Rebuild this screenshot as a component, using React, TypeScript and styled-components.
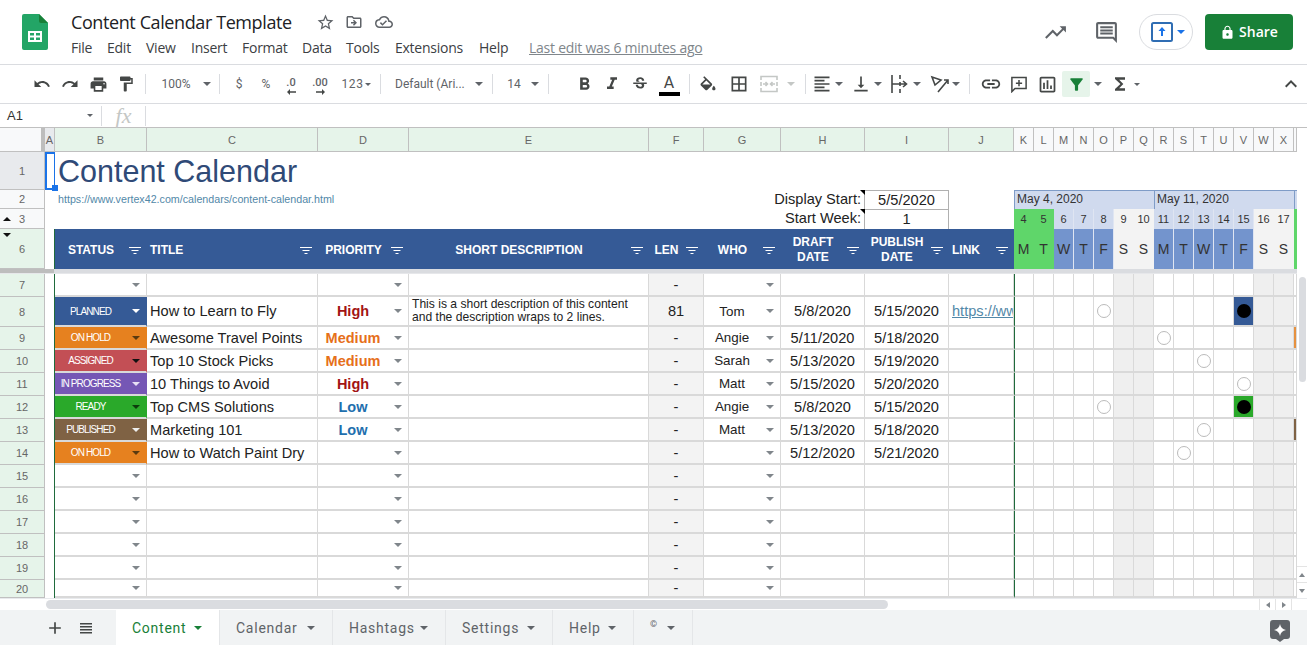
import React from 'react';
import styled, { createGlobalStyle, css } from 'styled-components';
import {
  MdUndo, MdRedo, MdPrint, MdFormatPaint, MdStrikethroughS, MdBorderAll,
  MdFormatAlignLeft, MdVerticalAlignBottom, MdLink, MdOutlineInsertChart,
  MdFilterAlt, MdFunctions, MdExpandLess, MdStarBorder, MdOutlineDriveFileMove, MdOutlineCloudDone,
  MdTrendingUp, MdOutlineComment, MdLock, MdAdd, MdFormatItalic, MdFormatBold,
} from 'react-icons/md';

const Global = createGlobalStyle`
  html, body { margin: 0; padding: 0; overflow: hidden; background: #fff; }
  * { box-sizing: border-box; }
`;

const UI = `Roboto, "Liberation Sans", sans-serif`;
const SHEET = `"Liberation Sans", Arial, sans-serif`;
const GRID_LINE = '#d9d9d9';
const FREEZE_GREEN = '#1f6b3c';

const Page = styled.div`
  width: 1307px; height: 645px; display: flex; flex-direction: column; overflow: hidden;
  font-family: ${UI}; color: #3c4043;
`;

/* ---------- header ---------- */
const Header = styled.header`
  height: 65px; flex: none; display: flex; align-items: flex-start; border-bottom: 1px solid #dadce0;
  padding: 14px 14px 0 22px;
`;
const TitleBlock = styled.div`margin-left: 23px; display: flex; flex-direction: column;`;
const TitleRow = styled.div`display: flex; align-items: center; height: 18px; margin-top: -1px;`;
const DocTitle = styled.div`font: 18px/18px "Open Sans", sans-serif; color: #202124; width: 244px; letter-spacing: -0.4px;`;
const TitleIcon = styled.span<{ $w: number }>`
  width: ${p => p.$w}px; display: flex; justify-content: center; color: #5f6368; font-size: 18px;
`;
const Menu = styled.nav`display: flex; align-items: center; height: 20px; margin-top: 7px; font: 14px/20px "Open Sans", ${UI}; color: #3c4043;`;
const MenuItem = styled.span<{ $w: number }>`width: ${p => p.$w}px; letter-spacing: -0.25px;`;
const LastEdit = styled.span`margin-left: 0; text-decoration: underline; color: #80868b; letter-spacing: -0.25px; white-space: nowrap;`;
const HeaderRight = styled.div`margin-left: auto; display: flex; align-items: center; height: 36px;`;
const HeadIcon = styled.span<{ $w: number }>`width: ${p => p.$w}px; display: flex; justify-content: center; color: #5f6368;`;
const PresentPill = styled.div`
  width: 54px; height: 36px; border: 1px solid #dadce0; border-radius: 18px; margin-left: 12px;
  display: flex; align-items: center; padding-left: 11px; gap: 4px;
`;
const ShareButton = styled.div`
  width: 88px; height: 36px; border-radius: 4px; background: #188038; color: #fff; margin-left: 12px;
  display: flex; align-items: center; justify-content: center; gap: 4px;
  font: 600 14px/36px "Open Sans", ${UI};
`;

/* ---------- toolbar ---------- */
const Toolbar = styled.div`
  height: 39px; flex: none; display: flex; align-items: center; padding: 0 2px 0 28px;
  border-bottom: 1px solid #dadce0; color: #444746; font-size: 12px;
`;
const Tool = styled.div<{ $w: number; $ml?: number; $active?: boolean; $off?: boolean; $auto?: boolean }>`
  width: ${p => p.$w}px; height: 26px; flex: none; display: flex; align-items: center; justify-content: center;
  margin-left: ${p => (p.$auto ? 'auto' : `${p.$ml ?? 0}px`)};
  color: ${p => (p.$off ? '#c4c7c5' : '#444746')};
  background: ${p => (p.$active ? '#e6f4ea' : 'transparent')};
  border-radius: 2px; white-space: nowrap;
`;
const TextTool = styled(Tool)<{ $left?: number }>`
  font: 12px/26px ${UI}; color: #5f6368;
  justify-content: ${p => (p.$left ? 'flex-start' : 'center')};
  padding-left: ${p => p.$left ?? 0}px;
`;
const NumberFormat = styled(TextTool)`letter-spacing: 0.6px; gap: 1px;`;
const Sep = styled.div<{ $w: number }>`
  width: ${p => p.$w}px; flex: none; height: 20px; display: flex; justify-content: center;
  &::after { content: ''; width: 1px; background: #dadce0; }
`;
const Caret = styled.span<{ $c?: string; $s?: number }>`
  display: inline-block; width: 0; height: 0; flex: none;
  border-left: ${p => p.$s ?? 4}px solid transparent;
  border-right: ${p => p.$s ?? 4}px solid transparent;
  border-top: ${p => p.$s ?? 4}px solid ${p => p.$c ?? '#5f6368'};
`;
const Stack = styled.div`display: flex; flex-direction: column; align-items: center; font: 500 11px/12px ${UI}; color: #5f6368; margin-top: 4px;`;
const ColorA = styled.div`
  display: flex; flex-direction: column; align-items: center; width: 22px;
  font: 16px/18px ${UI}; color: #444746; margin-top: 1px;
  &::after { content: ''; width: 21px; height: 4px; background: #000; }
`;

/* ---------- formula bar ---------- */
const FormulaBar = styled.div`
  height: 24px; flex: none; display: flex; align-items: center; border-bottom: 1px solid #c0c0c0;
  font: 13px/24px ${SHEET}; color: #333;
`;
const NameBox = styled.div`width: 102px; height: 20px; padding: 0 7px; display: flex; align-items: center; justify-content: space-between; border-right: 1px solid #dadce0; padding-right: 8px;`;
const Fx = styled.div`width: 44px; height: 20px; border-right: 1px solid #dadce0; text-align: center; font: italic 22px/20px "Liberation Serif", serif; color: #c4c7c5;`;

/* ---------- sheet ---------- */
const Body = styled.div`flex: none; height: 470px; display: flex;`;
const Sheet = styled.div`
  width: 1297px; flex: none; display: grid; overflow: hidden;
  grid-template-columns: 45px 10px 92px 171px 91px 240px 55px 77px 84px 84px 65px repeat(14, 20px) 3px;
  grid-template-rows: 24px 38px 19px 20px 40px 5px 23px 30px repeat(11, 23px) 18px;
  font-family: ${SHEET}; color: #222;
`;
const ColHead = styled.div<{ $tone: 'corner' | 'sel' | 'filter' | 'plain' }>`
  display: flex; align-items: center; justify-content: center; font-size: 11px; color: #666;
  border-right: 1px solid #c0c0c0; border-bottom: 1px solid #c0c0c0;
  background: ${p => ({ corner: '#f8f9fa', sel: '#e8eaed', filter: '#e6f4ea', plain: '#f8f9fa' }[p.$tone])};
  ${p => p.$tone === 'corner' && css`border-right: 4px solid #bdbdbd;`}
`;
const RowHead = styled.div<{ $tone: 'sel' | 'filter' | 'plain' }>`
  position: relative; display: flex; align-items: center; justify-content: center; font-size: 11px; color: #666;
  border-right: 1px solid #c0c0c0; border-bottom: 1px solid #c0c0c0;
  background: ${p => ({ sel: '#e8eaed', filter: '#e6f4ea', plain: '#f8f9fa' }[p.$tone])};
`;
const GroupArrow = styled.span<{ $up?: boolean; $top: number }>`
  position: absolute; left: 3px; top: ${p => p.$top}px; width: 0; height: 0;
  border-left: 4px solid transparent; border-right: 4px solid transparent;
  ${p => (p.$up ? 'border-bottom: 4px solid #111;' : 'border-top: 4px solid #111;')}
`;
const SelectedA = styled.div`position: relative; border: 2px solid #1a73e8; border-right-width: 1px;`;
const FillHandle = styled.span`position: absolute; right: -4px; bottom: -3px; width: 6px; height: 6px; background: #1a73e8;`;
const TitleCell = styled.div`grid-column: 3 / -1; font-size: 30.5px; line-height: 38px; padding-left: 3px; color: #2f4a77; white-space: nowrap;`;
const LinkCell = styled.div`grid-column: span 5; font-size: 10.7px; line-height: 18px; padding-left: 3px; color: #5288a8; white-space: nowrap;`;
const Blank = styled.div<{ $span?: number }>`${p => p.$span && `grid-column: span ${p.$span};`}`;
const LabelCell = styled.div`
  position: relative; grid-column: span 2; font-size: 14.6px; line-height: 18px; text-align: right; padding-right: 4px;
  &::after { content: ''; position: absolute; right: 0; top: 0; border-top: 5px solid #000; border-left: 5px solid transparent; }
`;
const ValueCell = styled.div`font-size: 14.6px; line-height: 18px; text-align: center; border: 1px solid #b0b0b0; margin: 0 0 -1px -1px;`;
const MonthCell = styled.div<{ $span?: number }>`
  grid-column: span ${p => p.$span ?? 1}; background: #d0daee; border-top: 1px solid #7f9cc7; border-left: 1px solid #7f9cc7;
  font-size: 12px; line-height: 17px; padding-left: 2px; color: #333; white-space: nowrap; overflow: hidden;
`;
const tones: Record<string, string> = {
  today: '#5fd66a', week: '#d0daee', weekdark: '#7394cd', weekend: '#f3f3f3',
};
const DayCell = styled.div<{ $tone: string; $big?: boolean }>`
  display: flex; align-items: center; justify-content: center; color: #333; overflow: hidden;
  font-size: ${p => (p.$big ? 14 : 11)}px;
  background: ${p => tones[p.$tone]};
  border-right: 1px solid ${p => (p.$tone === 'today' || p.$tone === 'weekend' ? 'transparent' : '#dfe5f2')};
`;
const HeaderCell = styled.div<{ $left?: boolean }>`
  position: relative; background: #355a96; color: #fff; font-weight: 700; font-size: 12px; line-height: 15px;
  display: flex; align-items: center; justify-content: ${p => (p.$left ? 'flex-start' : 'center')}; text-align: center;
  padding: ${p => (p.$left ? '2px 0 0 3px' : '2px 20px 0 0')};
`;
const FilterMark = styled.svg`position: absolute; right: 5px; top: 18px;`;
const FreezeBar = styled.div`grid-column: 1 / -1; background: linear-gradient(90deg, #bdbdbd 0 54px, #dadce0 54px); border-bottom: 1px solid #e6e7ea;`;
const GutterA = styled.div`border-right: 1px solid ${FREEZE_GREEN};`;

const gridLines = css`border-right: 1px solid ${GRID_LINE}; border-bottom: 2px solid ${GRID_LINE};`;
const Cell = styled.div<{ $center?: boolean; $bg?: string; $pad?: number }>`
  ${gridLines}
  display: flex; align-items: center; position: relative; overflow: hidden; white-space: nowrap;
  font-size: 14.6px; color: #222;
  justify-content: ${p => (p.$center ? 'center' : 'flex-start')};
  padding: 0 ${p => p.$pad ?? 0}px 0 ${p => (p.$center ? 0 : 3)}px;
  background: ${p => p.$bg ?? 'transparent'};
`;
const DropCaret = styled(Caret)`position: absolute; right: 6px; top: 50%; margin-top: -2px;`;
const StatusCell = styled(Cell)<{ $fill?: string; $fg?: string }>`
  background: ${p => p.$fill ?? 'transparent'};
  color: ${p => p.$fg ?? '#fff'};
  font-size: 10px; letter-spacing: -0.9px; justify-content: center; padding: 0 20px 0 0;
  border-right-color: ${p => p.$fill ?? GRID_LINE};
`;
const PriorityCell = styled(Cell)<{ $c: string }>`color: ${p => p.$c}; font-weight: 700; font-size: 14.5px; justify-content: center; padding: 0 20px 0 0;`;
const WhoCell = styled(Cell)`justify-content: center; padding: 0 20px 0 0; font-size: 13.4px;`;
const DescCell = styled(Cell)`white-space: normal; font-size: 12.1px; line-height: 13px;`;
const LinkValue = styled(Cell)`color: #5288a8; text-decoration: underline; justify-content: flex-start;`;
const Gantt = styled.div<{ $bg?: string; $edge?: boolean }>`
  ${gridLines}
  display: flex; align-items: center; justify-content: center; overflow: hidden;
  background: ${p => p.$bg ?? 'transparent'};
  ${p => p.$edge && `border-left: 1px solid ${FREEZE_GREEN};`}
`;
const Ring = styled.span<{ $solid?: boolean }>`
  width: 14px; height: 14px; flex: none; border-radius: 50%;
  ${p => (p.$solid ? 'background: #000;' : 'background: #fff; border: 1px solid #bbb;')}
`;

/* ---------- scrollbars ---------- */
const VScroll = styled.div`width: 10px; flex: none; display: flex; flex-direction: column; padding-top: 149px;`;
const VThumb = styled.div`width: 7px; height: 105px; margin-left: 2px; border-radius: 4px; background: #dadce0;`;
const ScrollBtn = styled.div<{ $first?: boolean }>`
  height: 16px; display: flex; align-items: center; justify-content: center; border-top: 1px solid #e4e4e4;
  ${p => p.$first && 'margin-top: auto;'}
`;
const HScroll = styled.div`height: 12px; flex: none; display: flex; align-items: center; border-top: 1px solid #e8eaed; padding-left: 46px;`;
const HThumb = styled.div`width: 842px; height: 9px; border-radius: 5px; background: #dadce0;`;
const HBtn = styled.div<{ $first?: boolean }>`
  width: 16px; height: 12px; display: flex; align-items: center; justify-content: center; border-left: 1px solid #e4e4e4;
  ${p => p.$first && 'margin-left: auto;'}
`;
const SideCaret = styled.span<{ $left?: boolean }>`
  width: 0; height: 0; border-top: 3px solid transparent; border-bottom: 3px solid transparent;
  ${p => (p.$left ? 'border-right: 4px solid #80868b;' : 'border-left: 4px solid #80868b;')}
`;
const UpCaret = styled.span<{ $down?: boolean }>`
  width: 0; height: 0; border-left: 3px solid transparent; border-right: 3px solid transparent;
  ${p => (p.$down ? 'border-top: 4px solid #80868b;' : 'border-bottom: 4px solid #80868b;')}
`;

/* ---------- tabs ---------- */
const TabBar = styled.div`flex: 1; display: flex; align-items: stretch; background: #f1f3f4; padding-left: 44px;`;
const TabTool = styled.div<{ $w: number }>`width: ${p => p.$w}px; display: flex; align-items: center; justify-content: center; color: #444746;`;
const Tab = styled.div<{ $w: number; $active?: boolean }>`
  width: ${p => p.$w}px; display: flex; align-items: center; justify-content: space-between;
  padding: 0 17px 0 16px; border-right: 1px solid #e4e6e8;
  font: 400 14px/1 ${UI}; letter-spacing: 0.75px;
  color: ${p => (p.$active ? '#188038' : '#5f6368')};
  background: ${p => (p.$active ? '#fff' : 'transparent')};
`;
const Copyright = styled.span`font-size: 9px; margin-top: -6px;`;
const Explore = styled.div`
  margin: 10px 17px 0 auto; width: 20px; height: 19px; border-radius: 3px; background: #5f6368;
  display: flex; align-items: center; justify-content: center; position: relative;
  &::after { content: ''; position: absolute; left: 6px; bottom: -3px; border-top: 3px solid #5f6368; border-left: 4px solid transparent; border-right: 4px solid transparent; }
`;

/* ---------- drawings ---------- */
const Logo = () => (
  <svg width="26" height="36" viewBox="0 0 26 36" style={{ flex: 'none' }}>
    <path d="M2 0h15l9 9v25a2 2 0 0 1-2 2H2a2 2 0 0 1-2-2V2a2 2 0 0 1 2-2z" fill="#23a566" />
    <path d="M17 0l9 9h-7a2 2 0 0 1-2-2z" fill="#188038" />
    <path d="M6 17h14v11H6z M8 19v2.5h4V19z M14 19v2.5h4V19z M8 23.500V26h4v-2.500z M14 23.500V26h4v-2.500z" fill="#fff" fillRule="evenodd" />
  </svg>
);
const PresentIcon = () => (
  <svg width="22" height="20" viewBox="0 0 22 20">
    <rect x="1" y="1" width="20" height="18" rx="1.500" fill="none" stroke="#2f6db3" strokeWidth="2" />
    <path d="M11 5l-3.500 4H10v5h2V9h2.500z" fill="#1a73e8" />
  </svg>
);
const FillIcon = () => (
  <svg width="20" height="17" viewBox="0 0 24 20">
    <path d="M16.560 8.940L7.620 0 6.210 1.410l2.380 2.380-5.150 5.150c-.59.59-.59 1.540 0 2.120l5.500 5.500c.29.29.68.44 1.060.44s.77-.15 1.060-.44l5.500-5.500c.59-.58.59-1.530 0-2.120zM5.210 10L10 5.210 14.790 10H5.210zM19 11.500s-2 2.170-2 3.500c0 1.100.9 2 2 2s2-.9 2-2c0-1.330-2-3.500-2-3.500z" fill="#444746" />
  </svg>
);
const CommentPlusIcon = () => (
  <svg width="16" height="17" viewBox="0 0 18 19" fill="none" stroke="#444746" strokeWidth="1.700">
    <path d="M1 1.500h16v12.500H4.500L1 17.500z M9 4.500v7 M5.500 8h7" />
  </svg>
);
const MergeIcon = () => (
  <svg width="18" height="18" viewBox="0 0 18 18" fill="none" stroke="#c4c7c5" strokeWidth="1.600">
    <path d="M1 5V1.500h16V5 M1 13v3.500h16V13 M1 7v4 M17 7v4 M3 9h4 M11 9h4 M5.500 7l2 2-2 2 M12.500 7l-2 2 2 2" />
  </svg>
);
const WrapIcon = () => (
  <svg width="20" height="18" viewBox="0 0 20 18" fill="none" stroke="#444746" strokeWidth="1.600">
    <path d="M2 0v18 M10 0v4 M10 7v4 M10 14v4 M2 9h14 M13 6l3.500 3-3.500 3" />
  </svg>
);
const RotateIcon = () => (
  <svg width="20" height="18" viewBox="0 0 20 18" fill="none" stroke="#444746" strokeWidth="1.600">
    <path d="M2 2l9 3-6 5z M8 17L18 5 M14 5h4v4" />
  </svg>
);
const SmallArrow = ({ dir }: { dir: 'l' | 'r' }) => (
  <svg width="9" height="6" viewBox="0 0 9 6">
    <path d={dir === 'l' ? 'M9 2.300H3V0L0 3l3 3V3.700h6z' : 'M0 2.300h6V0l3 3-3 3V3.700H0z'} fill="#444746" />
  </svg>
);
const Filter = () => (
  <FilterMark width="14" height="8" viewBox="0 0 14 8">
    <path d="M1 .5h12 M3.500 3.500h7 M5.500 6.500h3" stroke="#fff" strokeWidth="1" fill="none" />
  </FilterMark>
);
const Sparkle = () => (
  <svg width="12" height="12" viewBox="0 0 12 12"><path d="M6 0c.6 3.400 2.600 5.400 6 6-3.400.6-5.400 2.600-6 6-.6-3.400-2.600-5.400-6-6 3.400-.6 5.400-2.600 6-6z" fill="#fff" /></svg>
);

/* ---------- data ---------- */
const COLS = ['K','L','M','N','O','P','Q','R','S','T','U','V','W','X'];
const WEEKEND = new Set([5, 6, 12, 13]);
const dayTone = (i: number, dark: boolean) =>
  i < 2 ? 'today' : WEEKEND.has(i) ? 'weekend' : dark ? 'weekdark' : 'week';
const LETTERS = ['M','T','W','T','F','S','S','M','T','W','T','F','S','S'];

type Status = { label: string; fill: string; caret: string };
const S: Record<string, Status> = {
  planned: { label: 'PLANNED', fill: '#355a96', caret: '#fff' },
  hold: { label: 'ON HOLD', fill: '#e6811f', caret: '#5a3a10' },
  assigned: { label: 'ASSIGNED', fill: '#c34f55', caret: '#111' },
  progress: { label: 'IN PROGRESS', fill: '#7557b5', caret: '#e8e0f5' },
  ready: { label: 'READY', fill: '#2aa92a', caret: '#0c3d0c' },
  published: { label: 'PUBLISHED', fill: '#7f6244', caret: '#eee' },
};
const PRI: Record<string, string> = { High: '#a21414', Medium: '#e6701a', Low: '#1f6fae' };

type Row = {
  n: number; status?: Status; title?: string; pri?: string; desc?: string; len: string; who?: string;
  draft?: string; pub?: string; link?: string; rings?: number[]; solid?: [number, string]; edge?: string;
};
const ROWS: Row[] = [
  { n: 7, len: '-' },
  { n: 8, status: S.planned, title: 'How to Learn to Fly', pri: 'High', desc: 'This is a short description of this content and the description wraps to 2 lines.', len: '81', who: 'Tom', draft: '5/8/2020', pub: '5/15/2020', link: 'https://www.vertex42.com', rings: [4], solid: [11, '#355a96'] },
  { n: 9, status: S.hold, title: 'Awesome Travel Points', pri: 'Medium', len: '-', who: 'Angie', draft: '5/11/2020', pub: '5/18/2020', rings: [7], edge: '#e6913f' },
  { n: 10, status: S.assigned, title: 'Top 10 Stock Picks', pri: 'Medium', len: '-', who: 'Sarah', draft: '5/13/2020', pub: '5/19/2020', rings: [9] },
  { n: 11, status: S.progress, title: '10 Things to Avoid', pri: 'High', len: '-', who: 'Matt', draft: '5/15/2020', pub: '5/20/2020', rings: [11] },
  { n: 12, status: S.ready, title: 'Top CMS Solutions', pri: 'Low', len: '-', who: 'Angie', draft: '5/8/2020', pub: '5/15/2020', rings: [4], solid: [11, '#2aa92a'] },
  { n: 13, status: S.published, title: 'Marketing 101', pri: 'Low', len: '-', who: 'Matt', draft: '5/13/2020', pub: '5/18/2020', rings: [9], edge: '#7f6244' },
  { n: 14, status: S.hold, title: 'How to Watch Paint Dry', len: '-', draft: '5/12/2020', pub: '5/21/2020', rings: [8] },
  ...[15, 16, 17, 18, 19, 20].map(n => ({ n, len: '-' })),
];

const HEADERS: { key: string; label: React.ReactNode; left?: boolean }[] = [
  { key: 'b', label: 'STATUS' },
  { key: 'c', label: 'TITLE', left: true },
  { key: 'd', label: 'PRIORITY' },
  { key: 'e', label: 'SHORT DESCRIPTION' },
  { key: 'f', label: 'LEN' },
  { key: 'g', label: 'WHO' },
  { key: 'h', label: <>DRAFT<br />DATE</> },
  { key: 'i', label: <>PUBLISH<br />DATE</> },
  { key: 'j', label: 'LINK', left: true },
];

const MENU: [string, number][] = [['File', 36], ['Edit', 39], ['View', 45], ['Insert', 51], ['Format', 60], ['Data', 44], ['Tools', 49], ['Extensions', 84], ['Help', 50]];

export default function App() {
  return (
    <Page>
      <Global />
      <Header>
        <Logo />
        <TitleBlock>
          <TitleRow>
            <DocTitle>Content Calendar Template</DocTitle>
            <TitleIcon $w={20}><MdStarBorder size={19} /></TitleIcon>
            <TitleIcon $w={38}><MdOutlineDriveFileMove size={18} /></TitleIcon>
            <TitleIcon $w={21}><MdOutlineCloudDone size={18} /></TitleIcon>
          </TitleRow>
          <Menu>
            {MENU.map(([m, w]) => <MenuItem key={m} $w={w}>{m}</MenuItem>)}
            <LastEdit>Last edit was 6 minutes ago</LastEdit>
          </Menu>
        </TitleBlock>
        <HeaderRight>
          <HeadIcon $w={60}><MdTrendingUp size={25} /></HeadIcon>
          <HeadIcon $w={42}><MdOutlineComment size={25} /></HeadIcon>
          <PresentPill><PresentIcon /><Caret $c="#1a73e8" /></PresentPill>
          <ShareButton><MdLock size={15} />Share</ShareButton>
        </HeaderRight>
      </Header>

      <Toolbar>
        <Tool $w={28}><MdUndo size={18} /></Tool>
        <Tool $w={28}><MdRedo size={18} /></Tool>
        <Tool $w={28}><MdPrint size={19} /></Tool>
        <Tool $w={28}><MdFormatPaint size={18} /></Tool>
        <Sep $w={10} />
        <TextTool $w={52}>100%</TextTool>
        <Tool $w={10}><Caret /></Tool>
        <Sep $w={14} />
        <TextTool $w={26}>$</TextTool>
        <TextTool $w={28}>%</TextTool>
        <TextTool $w={22}><Stack>.0<SmallArrow dir="l" /></Stack></TextTool>
        <TextTool $w={36}><Stack>.00<SmallArrow dir="r" /></Stack></TextTool>
        <NumberFormat $w={36}>123<Caret $s={3} /></NumberFormat>
        <Sep $w={12} />
        <TextTool $w={86} $left={9}>Default (Ari...</TextTool>
        <Tool $w={14}><Caret /></Tool>
        <Sep $w={12} />
        <TextTool $w={32}>14</TextTool>
        <Tool $w={10}><Caret /></Tool>
        <Sep $w={16} />
        <Tool $w={28} $ml={14}><MdFormatBold size={21} /></Tool>
        <Tool $w={28}><MdFormatItalic size={20} /></Tool>
        <Tool $w={28}><MdStrikethroughS size={18} /></Tool>
        <Tool $w={30}><ColorA>A</ColorA></Tool>
        <Sep $w={10} />
        <Tool $w={28}><FillIcon /></Tool>
        <Tool $w={28} $ml={3}><MdBorderAll size={20} /></Tool>
        <Tool $w={28} $ml={2}><MergeIcon /></Tool>
        <Tool $w={16}><Caret $c="#c4c7c5" /></Tool>
        <Sep $w={12} />
        <Tool $w={22}><MdFormatAlignLeft size={20} /></Tool>
        <Tool $w={12}><Caret /></Tool>
        <Tool $w={22} $ml={5}><MdVerticalAlignBottom size={20} /></Tool>
        <Tool $w={12}><Caret /></Tool>
        <Tool $w={22} $ml={5}><WrapIcon /></Tool>
        <Tool $w={12}><Caret /></Tool>
        <Tool $w={22} $ml={6}><RotateIcon /></Tool>
        <Tool $w={10}><Caret /></Tool>
        <Sep $w={16} />
        <Tool $w={28}><MdLink size={22} /></Tool>
        <Tool $w={28}><CommentPlusIcon /></Tool>
        <Tool $w={28}><MdOutlineInsertChart size={21} /></Tool>
        <Tool $w={28} $ml={1} $active><MdFilterAlt size={19} color="#188038" /></Tool>
        <Tool $w={16}><Caret /></Tool>
        <Tool $w={28}><MdFunctions size={20} /></Tool>
        <Tool $w={6}><Caret $s={3} /></Tool>
        <Tool $w={28} $auto><MdExpandLess size={24} /></Tool>
      </Toolbar>

      <FormulaBar>
        <NameBox>A1<Caret $s={3} /></NameBox>
        <Fx>fx</Fx>
      </FormulaBar>

      <Body>
        <Sheet>
          <ColHead $tone="corner" />
          <ColHead $tone="sel">A</ColHead>
          {['B','C','D','E','F','G','H','I','J'].map(c => <ColHead key={c} $tone="filter">{c}</ColHead>)}
          {COLS.map(c => <ColHead key={c} $tone="plain">{c}</ColHead>)}
          <ColHead $tone="plain" />

          <RowHead $tone="sel">1</RowHead>
          <SelectedA><FillHandle /></SelectedA>
          <TitleCell>Content Calendar</TitleCell>

          <RowHead $tone="plain">2</RowHead>
          <Blank />
          <LinkCell>https://www.vertex42.com/calendars/content-calendar.html</LinkCell>
          <LabelCell>Display Start:</LabelCell>
          <ValueCell>5/5/2020</ValueCell>
          <Blank />
          <MonthCell $span={7}>May 4, 2020</MonthCell>
          <MonthCell $span={7}>May 11, 2020</MonthCell>
          <MonthCell />

          <RowHead $tone="plain">3<GroupArrow $up $top={8} /></RowHead>
          <Blank $span={6} />
          <LabelCell>Start Week:</LabelCell>
          <ValueCell>1</ValueCell>
          <Blank />
          {LETTERS.map((_, i) => <DayCell key={i} $tone={dayTone(i, false)}>{i + 4}</DayCell>)}
          <DayCell $tone="today" />

          <RowHead $tone="filter">6<GroupArrow $top={4} /></RowHead>
          <GutterA />
          {HEADERS.map(h => <HeaderCell key={h.key} $left={h.left}><span>{h.label}</span><Filter /></HeaderCell>)}
          {LETTERS.map((l, i) => <DayCell key={i} $big $tone={dayTone(i, true)}>{l}</DayCell>)}
          <DayCell $tone="today" />

          <FreezeBar />

          {ROWS.map(r => (
            <React.Fragment key={r.n}>
              <RowHead $tone="filter">{r.n}</RowHead>
              <GutterA />
              <StatusCell $fill={r.status?.fill}>
                {r.status?.label}
                <DropCaret $c={r.status?.caret ?? '#80868b'} />
              </StatusCell>
              <Cell>{r.title}</Cell>
              <PriorityCell $c={PRI[r.pri ?? 'Low']}>{r.pri}<DropCaret $c="#80868b" /></PriorityCell>
              <DescCell>{r.desc}</DescCell>
              <Cell $center $bg="#f3f3f3">{r.len}</Cell>
              <WhoCell>{r.who}<DropCaret $c="#80868b" /></WhoCell>
              <Cell $center>{r.draft}</Cell>
              <Cell $center>{r.pub}</Cell>
              <LinkValue>{r.link}</LinkValue>
              {COLS.map((c, i) => {
                const solid = r.solid && r.solid[0] === i;
                return (
                  <Gantt key={c} $edge={i === 0} $bg={solid ? r.solid![1] : WEEKEND.has(i) ? '#efefef' : undefined}>
                    {solid ? <Ring $solid /> : r.rings?.includes(i) ? <Ring /> : null}
                  </Gantt>
                );
              })}
              <Gantt $bg={r.edge} />
            </React.Fragment>
          ))}
        </Sheet>
        <VScroll>
          <VThumb />
          <ScrollBtn $first><UpCaret /></ScrollBtn>
          <ScrollBtn><UpCaret $down /></ScrollBtn>
        </VScroll>
      </Body>

      <HScroll>
        <HThumb />
        <HBtn $first><SideCaret $left /></HBtn>
        <HBtn><SideCaret /></HBtn>
        <HBtn />
      </HScroll>

      <TabBar>
        <TabTool $w={22}><MdAdd size={20} /></TabTool>
        <TabTool $w={40}>
          <svg width="14" height="14" viewBox="0 0 14 14"><path d="M1 2h12v1.500H1z M1 5h12v1.500H1z M1 8h12v1.500H1z M1 11h12v1.500H1z" fill="#444746" /></svg>
        </TabTool>
        <TabTool $w={10} />
        <Tab $w={104} $active>Content<Caret $c="#188038" /></Tab>
        <Tab $w={113}>Calendar<Caret /></Tab>
        <Tab $w={113}>Hashtags<Caret /></Tab>
        <Tab $w={107}>Settings<Caret /></Tab>
        <Tab $w={81}>Help<Caret /></Tab>
        <Tab $w={59}><Copyright>©</Copyright><Caret /></Tab>
        <Explore><Sparkle /></Explore>
      </TabBar>
    </Page>
  );
}
